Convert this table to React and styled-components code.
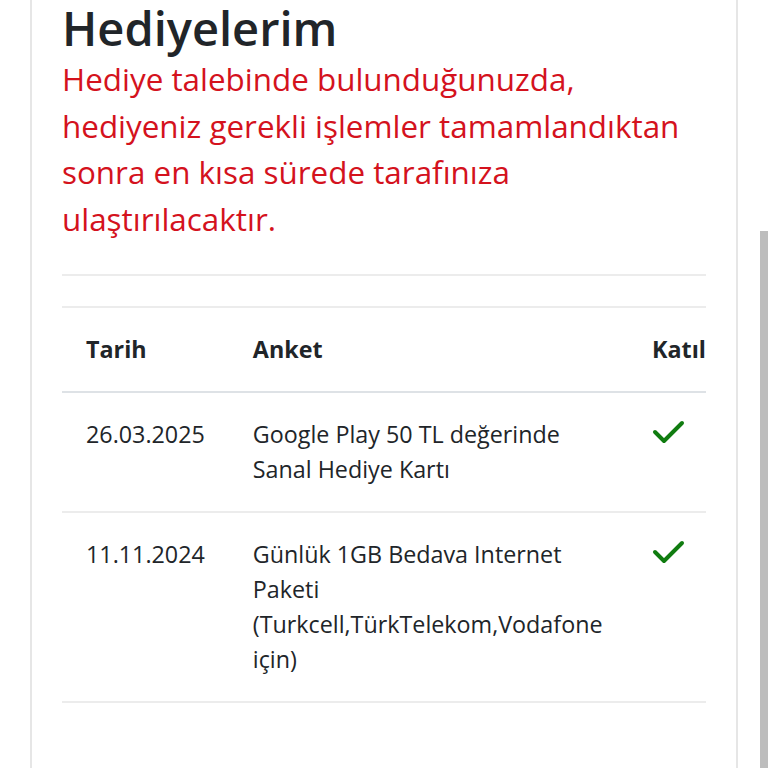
import React from 'react';
import styled, { createGlobalStyle } from 'styled-components';

const GlobalStyle = createGlobalStyle`
  html, body {
    margin: 0;
    padding: 0;
    background: #fff;
    font-family: "Open Sans", "Liberation Sans", sans-serif;
    overflow: hidden;
  }
`;

const Page = styled.div`
  height: 768px;
  padding: 0 30px;
  box-sizing: border-box;
`;

const Card = styled.div`
  height: 100%;
  border-left: 2px solid #e6e6e6;
  border-right: 2px solid #e6e6e6;
  padding: 0 30px;
  box-sizing: border-box;
`;

const Title = styled.h1`
  margin: 0;
  font-size: 47px;
  font-weight: 600;
  line-height: 56px;
  color: #212529;
`;

const Notice = styled.p`
  margin: 0;
  font-size: 31.4px;
  line-height: 46.7px;
  color: #d4121d;
`;

const Rule = styled.hr`
  margin: 31px 0 30px;
  border: 0;
  border-top: 2px solid #ececec;
`;

const Table = styled.table`
  width: 100%;
  border-collapse: collapse;
  font-size: 23.3px;
  line-height: 35px;
  color: #212529;

  th, td {
    padding: 24px;
    text-align: left;
    vertical-align: top;
  }
  th:last-child, td:last-child {
    padding-right: 0;
  }
`;

const Head = styled.thead`
  th {
    font-weight: 700;
    border-top: 2px solid #ececec;
    border-bottom: 2px solid #dee2e6;
  }
`;

const Row = styled.tr`
  td {
    border-bottom: 2px solid #ececec;
  }
`;

const DateCell = styled.td`
  width: 118px;
  white-space: nowrap;
`;

const CheckCell = styled.td`
  width: 54px;
  padding-top: 26px !important;
`;

const ScrollThumb = styled.div`
  position: fixed;
  right: 0;
  top: 231px;
  bottom: 0;
  width: 8px;
  background: #bdbdbd;
`;

const Check = () => (
  <svg width="34" height="26" viewBox="0 0 34 26" fill="none">
    <path d="M3 13 L12 22 L30 4" stroke="#107c10" strokeWidth="4" strokeLinecap="round" strokeLinejoin="round" />
  </svg>
);

const gifts = [
  { date: '26.03.2025', name: 'Google Play 50 TL değerinde Sanal Hediye Kartı' },
  { date: '11.11.2024', name: 'Günlük 1GB Bedava Internet Paketi (Turkcell,TürkTelekom,Vodafone için)' },
];

export default function App() {
  return (
    <>
      <GlobalStyle />
      <Page>
        <Card>
          <Title>Hediyelerim</Title>
          <Notice>
            Hediye talebinde bulunduğunuzda, hediyeniz gerekli işlemler tamamlandıktan
            sonra en kısa sürede tarafınıza ulaştırılacaktır.
          </Notice>
          <Rule />
          <Table>
            <Head>
              <tr>
                <th>Tarih</th>
                <th>Anket</th>
                <th>Katıl</th>
              </tr>
            </Head>
            <tbody>
              {gifts.map((g) => (
                <Row key={g.date}>
                  <DateCell>{g.date}</DateCell>
                  <td>{g.name}</td>
                  <CheckCell><Check /></CheckCell>
                </Row>
              ))}
            </tbody>
          </Table>
        </Card>
      </Page>
      <ScrollThumb />
    </>
  );
}
